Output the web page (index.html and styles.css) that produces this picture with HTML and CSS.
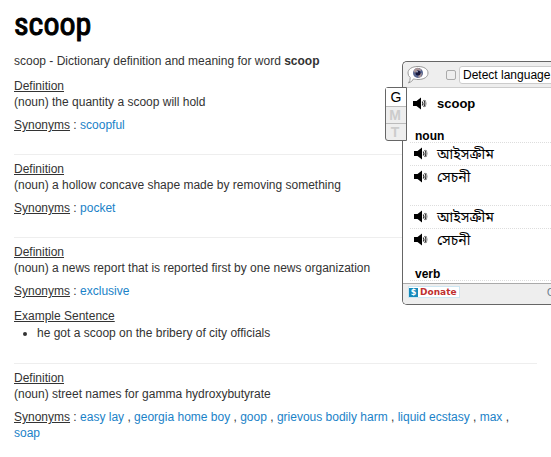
FILE: index.html
```html
<!DOCTYPE html>
<html lang="en">
<head>
<meta charset="utf-8">
<title>scoop - Dictionary</title>
<link rel="stylesheet" href="styles.css">
</head>
<body>
<svg class="defs" aria-hidden="true">
  <symbol id="speaker" viewBox="0 0 14 14">
    <path d="M0 4h3.500L8 .5v12L3.500 9H0z" fill="#000"/>
    <path d="M9.200 4.500q1.500 2 0 4M10.700 3q2.400 3.500 0 7" fill="none" stroke="#333" stroke-width="1.200"/>
    <path d="M12.200 3q2 3.500 0 7" fill="none" stroke="#999" stroke-width="1"/>
  </symbol>
</svg>
<main class="page">
  <h1>scoop</h1>
  <p class="intro">scoop - Dictionary definition and meaning for word <b>scoop</b></p>
  <section class="entry">
    <p><u>Definition</u><br>(noun) the quantity a scoop will hold</p>
    <p><u>Synonyms</u> : <a href="#scoopful">scoopful</a></p>
  </section>
  <section class="entry">
    <p><u>Definition</u><br>(noun) a hollow concave shape made by removing something</p>
    <p><u>Synonyms</u> : <a href="#pocket">pocket</a></p>
  </section>
  <section class="entry">
    <p><u>Definition</u><br>(noun) a news report that is reported first by one news organization</p>
    <p><u>Synonyms</u> : <a href="#exclusive">exclusive</a></p>
    <div class="example"><u>Example Sentence</u>
      <ul><li>he got a scoop on the bribery of city officials</li></ul>
    </div>
  </section>
  <section class="entry">
    <p><u>Definition</u><br>(noun) street names for gamma hydroxybutyrate</p>
    <p><u>Synonyms</u> : <a href="#easy-lay">easy lay</a> , <a href="#georgia">georgia home boy</a> , <a href="#goop">goop</a> , <a href="#gbh">grievous bodily harm</a> , <a href="#liquid">liquid ecstasy</a> , <a href="#max">max</a> , <a href="#soap">soap</a></p>
  </section>
</main>

<aside class="popup" aria-label="Translation">
  <div class="bar">
    <svg class="logo" viewBox="0 0 22 20" aria-hidden="true">
      <path d="M11 1.500C17 1.500 21 4 21 8s-4 6.500-10 6.500c-2 0-3-.2-4.500-.6Q5 17 1.500 18 3.500 15.500 3.200 12.500 1 11 1 8c0-4 4-6.500 10-6.500z" fill="#fff" stroke="#999"/>
      <circle cx="11" cy="8" r="5" fill="#57658f"/>
      <path d="M6.500 6q2-4 5-3l3 1.500-1 1.500-3-.5-2 3zM12 9l3-1-1 4-3 .5z" fill="#aa9697"/>
      <circle cx="11" cy="8" r="2.500" fill="#17183c"/>
      <circle cx="10" cy="6.800" r=".8" fill="#dce6fa"/>
    </svg>
    <input type="checkbox" aria-label="Remember language">
    <select aria-label="Source language"><option>Detect language</option></select>
  </div>
  <div class="results">
    <div class="word"><button type="button" aria-label="Listen"><svg><use href="#speaker"/></svg></button><b>scoop</b></div>
    <h2>noun</h2>
    <ul class="senses">
      <li><button type="button" aria-label="Listen"><svg><use href="#speaker"/></svg></button><span lang="bn">আইসক্রীম</span></li>
      <li><button type="button" aria-label="Listen"><svg><use href="#speaker"/></svg></button><span lang="bn">সেচনী</span></li>
    </ul>
    <ul class="senses again">
      <li><button type="button" aria-label="Listen"><svg><use href="#speaker"/></svg></button><span lang="bn">আইসক্রীম</span></li>
      <li><button type="button" aria-label="Listen"><svg><use href="#speaker"/></svg></button><span lang="bn">সেচনী</span></li>
    </ul>
    <h2 class="verb">verb</h2>
  </div>
  <div class="foot">
    <a class="donate" href="#donate"><span class="coin">$</span>Donate</a>
    <a class="more" href="#options">O</a>
  </div>
  <div class="tabs">
    <button type="button" class="on">G</button>
    <button type="button">M</button>
    <button type="button">T</button>
  </div>
</aside>
</body>
</html>
```
FILE: styles.css
```css
* { box-sizing: border-box; }
body {
  margin: 0;
  position: relative;
  overflow: hidden;
  background: #fff;
  color: #333;
  font: 12px/16px "Liberation Sans", Arial, sans-serif;
}
.defs { position: absolute; width: 0; height: 0; }
.page { padding: 4px 14px; }
h1 {
  margin: 0 0 9px;
  color: #000;
  font: 32px/40px "Liberation Sans Narrow", "Roboto Condensed", "Liberation Sans", sans-serif;
  -webkit-text-stroke: 1px #000;
}
.intro { margin: 0 0 9px; }
.entry p { margin: 0 0 7px; }
.entry p:last-child { margin: 0; }
.entry + .entry { margin-top: 21px; padding-top: 6px; border-top: 1px solid #eee; }
a { color: #1a82c8; text-decoration: none; }
.example { padding: 2px 0 1px; }
.example ul { margin: 1px 0 0; padding-left: 23px; }

.popup {
  position: absolute;
  top: 61px;
  left: 402px;
  right: 0;
  border: 1px solid #666;
  border-right: 0;
  border-radius: 5px 0 0 5px;
  background: #fff;
  color: #000;
}
.bar {
  display: flex;
  height: 26px;
  align-items: center;
  overflow: hidden;
  background: #eee;
  border-bottom: 1px solid #ccc;
  border-radius: 5px 0 0 0;
}
.logo { flex: none; width: 22px; height: 20px; margin-left: 4px; }
.bar input {
  appearance: none;
  flex: none;
  width: 10px;
  height: 10px;
  margin: 0 3px 0 17px;
  border: 1px solid #aaa;
  border-radius: 2px;
  background: #eee;
}
.bar select {
  appearance: none;
  flex: none;
  width: 120px;
  height: 18px;
  padding: 0 3px;
  border: 1px solid #ccc;
  border-radius: 3px;
  background: #fff;
  color: #000;
  font: 12px "Liberation Sans", Arial, sans-serif;
}
.results { padding-left: 7px; }
.results button { flex: none; width: 14px; height: 14px; padding: 0; border: 0; background: none; }
.results svg { display: block; width: 14px; height: 14px; }
.word { display: flex; align-items: center; gap: 10px; height: 32px; padding-left: 3px; font-size: 13px; }
h2 { margin: 0; padding: 11px 0 0 5px; border-bottom: 1px dotted #ddd; font-size: 12px; line-height: 11px; }
.senses { margin: 0; padding: 0; list-style: none; }
.senses li { display: flex; align-items: center; gap: 9px; height: 22px; padding-left: 4px; font: 14px/20px "Noto Sans Bengali", "Lohit Bengali", FreeSans, "Liberation Sans", sans-serif; }
.senses span { padding-top: 4px; }
.senses li + li { height: 23px; border-top: 1px dotted #ddd; }
.again { margin-top: 17px; border-top: 1px dotted #ddd; }
.verb { padding-top: 18px; margin-bottom: 2px; }
.foot {
  display: flex;
  justify-content: space-between;
  height: 21px;
  padding: 2px 0 0 5px;
  overflow: hidden;
  border-top: 1px solid #aaa;
  border-radius: 0 0 0 4px;
  background: #eee;
}
.donate {
  display: flex;
  align-items: center;
  gap: 2px;
  height: 12px;
  padding-right: 2px;
  border: 1px solid #cde6f2;
  background: #fff;
  color: #c03030;
  font: bold 9px/10px "DejaVu Sans", sans-serif;
}
.coin { width: 9px; background: #168abb; color: #fff; font-size: 8px; line-height: 9px; text-align: center; }
.more { width: 4px; color: #678; font-size: 10px; line-height: 14px; }
.tabs {
  position: absolute;
  top: 25px;
  left: -18px;
  display: grid;
  width: 22px;
  border: 1px solid #666;
  border-radius: 3px 0 0 3px;
  background: #eee;
}
.tabs button {
  height: 17px;
  padding: 0 2px 0 0;
  border: 0;
  border-top: 1px solid #bbb;
  background: none;
  color: #ccc;
  font: bold 14px/14px "Liberation Sans", Arial, sans-serif;
}
.tabs .on { height: 18px; padding: 0; border: 0; background: #fff; color: #000; font-weight: normal; }
```
